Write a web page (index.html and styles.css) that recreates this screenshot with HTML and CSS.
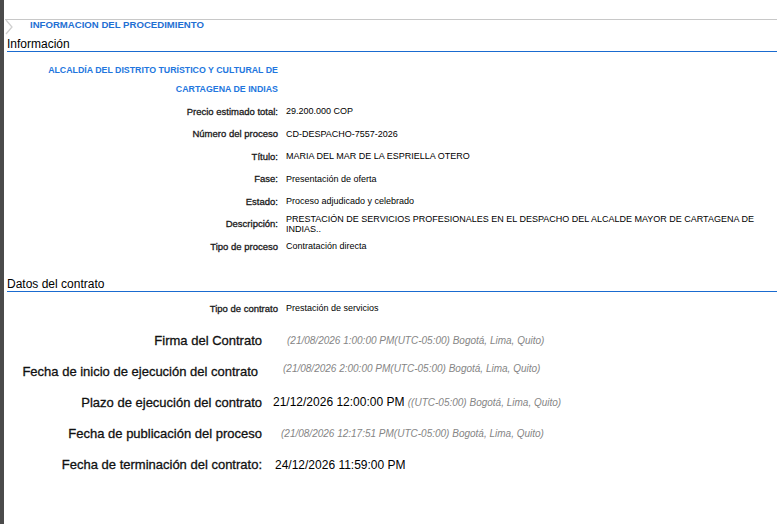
FILE: index.html
```html
<!DOCTYPE html>
<html lang="es">
<head>
<meta charset="utf-8">
<title>Informacion del procedimiento</title>
<link rel="stylesheet" href="styles.css">
</head>
<body>
<div class="page">
  <div class="tab">
    <svg class="chev" width="9" height="15" viewBox="0 0 9 15"><polyline points="1,0 7,7 1,14" fill="none" stroke="#d0d0d0" stroke-width="1.3"/></svg>
    <span class="tab-title">INFORMACION DEL PROCEDIMIENTO</span>
  </div>
  <div class="content">
    <h2 class="sec-title">Información</h2>
    <div class="entity">ALCALDÍA DEL DISTRITO TURÍSTICO Y CULTURAL DE<br>CARTAGENA DE INDIAS</div>
    <div class="info">
      <div class="row"><div class="lbl">Precio estimado total:</div><div class="val">29.200.000 COP</div></div>
      <div class="row"><div class="lbl">Número del proceso</div><div class="val">CD-DESPACHO-7557-2026</div></div>
      <div class="row"><div class="lbl">Título:</div><div class="val">MARIA DEL MAR DE LA ESPRIELLA OTERO</div></div>
      <div class="row"><div class="lbl">Fase:</div><div class="val">Presentación de oferta</div></div>
      <div class="row"><div class="lbl">Estado:</div><div class="val">Proceso adjudicado y celebrado</div></div>
      <div class="row"><div class="lbl">Descripción:</div><div class="val wrap">PRESTACIÓN DE SERVICIOS PROFESIONALES EN EL DESPACHO DEL ALCALDE MAYOR DE CARTAGENA DE INDIAS..</div></div>
      <div class="row"><div class="lbl">Tipo de proceso</div><div class="val">Contratación directa</div></div>
    </div>
    <h2 class="sec-title sec-title-2">Datos del contrato</h2>
    <div class="row row-tipo"><div class="lbl">Tipo de contrato</div><div class="val">Prestación de servicios</div></div>
    <div class="big">
      <div class="brow"><div class="blbl">Firma del Contrato</div><div class="date g1">(21/08/2026 1:00:00 PM(UTC-05:00) Bogotá, Lima, Quito)</div></div>
      <div class="brow"><div class="blbl pr4">Fecha de inicio de ejecución del contrato</div><div class="date g2 up">(21/08/2026 2:00:00 PM(UTC-05:00) Bogotá, Lima, Quito)</div></div>
      <div class="brow"><div class="blbl">Plazo de ejecución del contrato</div><div class="dval g3">21/12/2026 12:00:00 PM <span class="tz">((UTC-05:00) Bogotá, Lima, Quito)</span></div></div>
      <div class="brow"><div class="blbl">Fecha de publicación del proceso</div><div class="date g4">(21/08/2026 12:17:51 PM(UTC-05:00) Bogotá, Lima, Quito)</div></div>
      <div class="brow"><div class="blbl">Fecha de terminación del contrato:</div><div class="dval g5">24/12/2026 11:59:00 PM</div></div>
    </div>
  </div>
</div>
</body>
</html>
```
FILE: styles.css
```css
html, body {
  margin: 0;
  padding: 0;
  background: #ffffff;
}
body {
  font-family: "Liberation Sans", Arial, sans-serif;
  color: #000;
  border-left: 4px solid #4b4b4b;
  min-height: 524px;
  box-sizing: border-box;
}
.page {
  padding-top: 19px;
}
.tab {
  margin-left: 1px;
  border-top: 1px solid #c8c8c8;
  height: 14px;
  display: flex;
  align-items: flex-start;
}
.chev {
  display: block;
}
.tab-title {
  margin-left: 16px;
  font-size: 9.6px;
  font-weight: bold;
  color: #1f6fd3;
  line-height: 9px;
}
.content {
  margin-left: 3px;
}
.sec-title {
  margin: 3px 0 0 0;
  font-size: 12px;
  font-weight: normal;
  line-height: 14px;
  border-bottom: 1px solid #1a6bd0;
  color: #000;
}
.sec-title-2 {
  margin-top: 19px;
}
.entity {
  width: 271px;
  margin-top: 9px;
  text-align: right;
  font-size: 8.8px;
  font-weight: bold;
  color: #2276de;
  line-height: 19px;
}
.info {
  margin-top: 1px;
}
.row {
  display: flex;
  align-items: center;
  height: 22.5px;
}
.lbl {
  width: 271px;
  flex: none;
  text-align: right;
  font-size: 9.5px;
  color: #1a1a1a;
  -webkit-text-stroke: 0.3px #1a1a1a;
}
.val {
  margin-left: 8px;
  font-size: 9px;
  color: #000;
}
.val.wrap {
  width: 480px;
  line-height: 10px;
}
.row-tipo {
  height: 33px;
}
.big {
  display: flex;
  flex-direction: column;
}
.brow {
  display: flex;
  align-items: center;
  height: 31.2px;
}
.blbl {
  width: 255px;
  flex: none;
  text-align: right;
  font-size: 13px;
  color: #111;
  -webkit-text-stroke: 0.3px #111;
  box-sizing: border-box;
}
.blbl.pr4 {
  padding-right: 4px;
}
.date {
  font-size: 10px;
  font-style: italic;
  color: #858585;
}
.date.up {
  margin-bottom: 5px;
}
.dval {
  font-size: 12px;
  color: #000;
}
.tz {
  font-size: 10px;
  font-style: italic;
  color: #858585;
}
.g1 { margin-left: 25px; }
.g2 { margin-left: 21px; }
.g3 { margin-left: 11px; }
.g4 { margin-left: 19px; }
.g5 { margin-left: 13px; }
```
